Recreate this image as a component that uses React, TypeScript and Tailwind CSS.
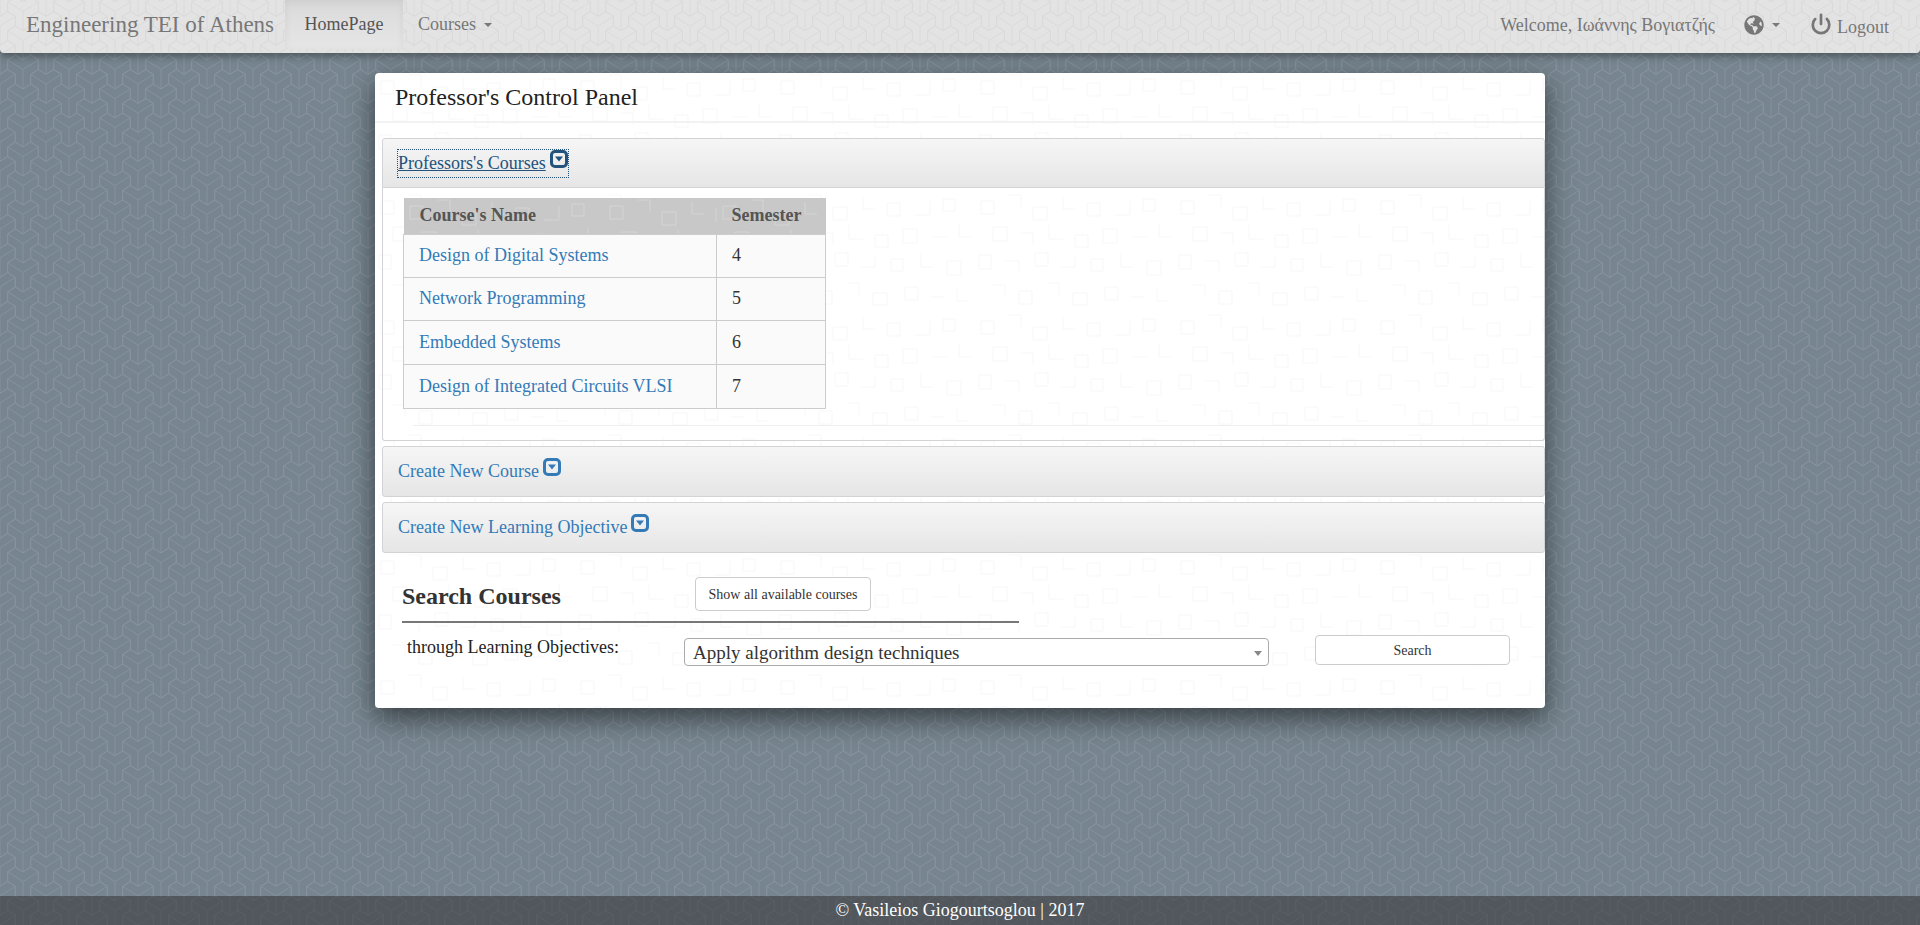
import React from 'react';
import { Power } from 'lucide-react';
import { FaGlobeAmericas } from 'react-icons/fa';

const Y_OUTLINE =
  '0,19.33 7.67,14.5 7.67,4.83 15.33,0 15.33,-9.67 7.67,-14.5 0,-9.67 -7.67,-14.5 -15.33,-9.67 -15.33,0 -7.67,4.83 -7.67,14.5';
const Y_SPOTS = [
  [0, -3], [46, -3], [0, 26], [46, 26], [0, 55], [46, 55],
  [23, -17.5], [23, 11.5], [23, 40.5],
];

// the Y shaped tiles of the page background
const YPattern: React.FC<{ id: string; color: string }> = ({ id, color }) => (
  <svg className="absolute inset-0 w-full h-full pointer-events-none" aria-hidden="true">
    <defs>
      <pattern id={id} width="46" height="29" patternUnits="userSpaceOnUse">
        {Y_SPOTS.map(([x, y]) => (
          <g key={`${x}-${y}`} transform={`translate(${x} ${y})`} fill="none" stroke={color} strokeWidth="1">
            <polygon points={Y_OUTLINE} />
            <path d="M0 0V19.33M0 0L-15.33 -9.67M0 0L15.33 -9.67" />
          </g>
        ))}
      </pattern>
    </defs>
    <rect width="100%" height="100%" fill={`url(#${id})`} />
  </svg>
);

const MAZE_PATH =
  'M6 8h13v13h-13zM34 2h12v12M58 14h14v13h-14zM88 4v12h12M112 10h13v13h-13zM140 22h15v-14M168 6h12v12h-12z' +
  'M18 34h14v14h-14zM46 40h12v12M74 32v14h14M100 42h13v12h-13zM128 36h14v14h-14zM158 44h14M184 30v14h12' +
  'M4 62h12v14h-12zM30 68h14v12M60 60h13v13h-13zM86 74h14v-12M116 66h12v12h-12zM146 60v14h12M172 68h14v14h-14z' +
  'M16 92h14v12M44 98h13v13h-13zM72 90h12v14M98 100h14v12h-14zM130 94h13v13h-13zM156 104h14M182 96v12h12';

// the faint maze texture on the white panel and the table head
const Maze: React.FC<{ id: string; color: string }> = ({ id, color }) => (
  <svg className="absolute inset-0 w-full h-full pointer-events-none" aria-hidden="true">
    <defs>
      <pattern id={id} width="200" height="120" patternUnits="userSpaceOnUse">
        <path d={MAZE_PATH} fill="none" stroke={color} strokeWidth="1" />
      </pattern>
    </defs>
    <rect width="100%" height="100%" fill={`url(#${id})`} />
  </svg>
);

const CollapseIcon = () => (
  <svg width="18" height="18" viewBox="0 0 18 18" className="inline-block ml-1 align-[1px]" aria-hidden="true">
    <rect x="1.5" y="1.5" width="15" height="15" rx="3.5" fill="none" stroke="currentColor" strokeWidth="3" />
    <path d="M5 6.5h8L9 11.5z" fill="currentColor" />
  </svg>
);

const Caret = () => (
  <span className="inline-block w-0 h-0 ml-2 align-middle border-x-4 border-x-transparent border-t-4 border-t-[#777]" />
);

const courses = [
  { name: 'Design of Digital Systems', semester: 4, height: 'h-[43px]' },
  { name: 'Network Programming', semester: 5, height: 'h-[43px]' },
  { name: 'Embedded Systems', semester: 6, height: 'h-[44px]' },
  { name: 'Design of Integrated Circuits VLSI', semester: 7, height: 'h-[44px]' },
];

const AccordionHeader: React.FC<{ title: string }> = ({ title }) => (
  <div className="relative h-[51px] flex items-center pl-[15px] border border-[#d3d3d3] rounded-[3px] bg-gradient-to-b from-[#f6f6f6] to-[#e6e6e6] text-[18px] text-[#337ab7]">
    <a href="#" className="no-underline">
      {title}
      <CollapseIcon />
    </a>
  </div>
);

export default function App() {
  return (
    <div className="relative min-h-screen flex flex-col bg-[#76858f] font-['Liberation_Serif',serif] text-[#333] overflow-hidden">
      <YPattern id="page-y" color="#86919b" />

      <nav className="relative z-10 h-[53px] flex items-start justify-between bg-[#e3e3e3] rounded-b-[4px] shadow-[0_2px_10px_rgba(0,0,0,0.45)] text-[#777]">
        <YPattern id="nav-y" color="#dadada" />
        <div className="relative flex items-start">
          <a className="h-[50px] pl-[26px] pr-[11px] flex items-center text-[23px]">Engineering TEI of Athens</a>
          <a className="h-[49px] w-[118px] flex items-center justify-center text-[18px] text-[#555] bg-gradient-to-b from-[#dadada] to-[#e6e6e6] shadow-[inset_0_3px_9px_rgba(0,0,0,0.06)]">
            HomePage
          </a>
          <a className="h-[49px] pl-[15px] flex items-center text-[18px]">
            Courses
            <Caret />
          </a>
        </div>
        <div className="relative flex items-start pr-[31px]">
          <span className="h-[50px] flex items-center text-[18px]">Welcome, Ιωάννης Βογιατζής</span>
          <span className="h-[50px] ml-[29px] flex items-center">
            <FaGlobeAmericas size={20} />
            <Caret />
          </span>
          <span className="h-[50px] ml-[30px] flex items-center text-[18px]">
            <Power size={22} strokeWidth={3} className="-mt-[2px]" />
            <span className="ml-[5px] mt-[5px]">Logout</span>
          </span>
        </div>
      </nav>

      <main className="relative flex-1 pt-[20px]">
        <section className="relative w-[1170px] mx-auto h-[635px] bg-white rounded-[4px] shadow-[0_10px_28px_rgba(0,0,0,0.55)]">
          <Maze id="panel-maze" color="#f7f7f7" />
          <div className="relative">
            <h1 className="h-[50px] flex items-center pl-[20px] text-[24px] font-normal text-[#222] border-b-2 border-[#f2f2f2]">
              Professor's Control Panel
            </h1>

            <div className="ml-[7px] mt-[15px] flex flex-col">
              <div className="relative h-[50px] flex items-center pl-[15px] border border-[#d3d3d3] rounded-t-[3px] bg-gradient-to-b from-[#f6f6f6] to-[#e6e6e6] text-[18px] text-[#23527c]">
                <a href="#" className="underline outline-1 outline-dotted outline-[#23527c]">
                  Professors's Courses
                  <CollapseIcon />
                </a>
              </div>
              <div className="h-[253px] border border-t-0 border-[#d3d3d3] rounded-b-[3px] pl-[20px] pt-[10px]">
                <table className="w-[423px] table-fixed border-collapse text-[18px]">
                  <thead>
                    <tr className="h-[36px] text-left text-[#555]">
                      <th className="relative w-[313px] pl-[16px] bg-[#c8c8c8] font-bold overflow-hidden">
                        <Maze id="th-maze-1" color="#d4d4d4" />
                        <span className="relative">Course's Name</span>
                      </th>
                      <th className="relative pl-[15px] bg-[#c8c8c8] font-bold overflow-hidden">
                        <Maze id="th-maze-2" color="#d4d4d4" />
                        <span className="relative">Semester</span>
                      </th>
                    </tr>
                  </thead>
                  <tbody>
                    {courses.map(course => (
                      <tr key={course.name} className={course.height}>
                        <td className="pl-[15px] border border-[#ccc] bg-[#fafafa] text-[#337ab7] whitespace-nowrap">
                          {course.name}
                        </td>
                        <td className="pl-[15px] border border-[#ccc] bg-[#fafafa]">{course.semester}</td>
                      </tr>
                    ))}
                  </tbody>
                </table>
                <div className="ml-[10px] mt-[16px] border-t border-[#eee]" />
              </div>
              <div className="mt-[5px] flex flex-col gap-[5px]">
                <AccordionHeader title="Create New Course" />
                <AccordionHeader title="Create New Learning Objective" />
              </div>
            </div>

            <div className="ml-[27px] w-[617px] mt-[24px] h-[46px] flex items-start border-b-2 border-[#777]">
              <h2 className="w-[293px] pt-[1px] text-[24px] font-bold text-[#333]">Search Courses</h2>
              <button className="h-[34px] w-[176px] border border-[#ccc] rounded-[4px] bg-white text-[14px] text-[#333]">
                Show all available courses
              </button>
            </div>

            <div className="flex items-start mt-[12px] pl-[32px] text-[18px]">
              <label className="w-[277px] text-[#222] leading-[24px]">through Learning Objectives:</label>
              <div className="relative w-[585px] h-[28px] mt-[3px] pl-[8px] border border-[#aaa] rounded-[4px] bg-white text-[19px] leading-[28px] text-[#333]">
                Apply algorithm design techniques
                <span className="absolute right-[6px] top-[12px] w-0 h-0 border-x-4 border-x-transparent border-t-[5px] border-t-[#888]" />
              </div>
              <button className="ml-[46px] h-[30px] w-[195px] border border-[#ccc] rounded-[4px] bg-white text-[14px] text-[#333]">
                Search
              </button>
            </div>
          </div>
        </section>
      </main>

      <footer className="relative h-[29px] flex items-center justify-center bg-[rgba(52,52,52,0.56)] text-[18px] text-white">
        © Vasileios Giogourtsoglou | 2017
      </footer>
    </div>
  );
}
